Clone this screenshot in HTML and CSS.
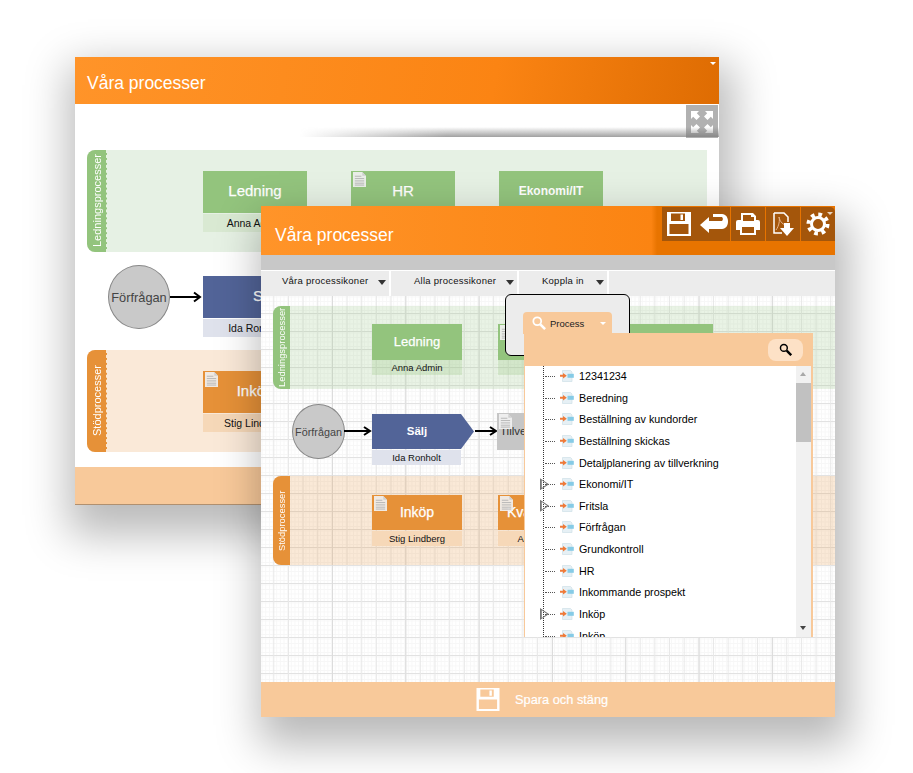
FILE: index.html
```html
<!DOCTYPE html>
<html lang="sv">
<head>
<meta charset="utf-8">
<title>Våra processer</title>
<link rel="stylesheet" href="styles.css">
</head>
<body>
<svg class="defs" width="0" height="0" aria-hidden="true">
  <symbol id="doc" viewBox="0 0 14 16">
    <path d="M0 0H10L14 4V16H0Z" fill="#f1f1f1" fill-opacity=".92"/>
    <path d="M10 0V4H14Z" fill="#cfcfcf"/>
    <path d="M2 4.500H9M2 7H12M2 9.500H12M2 12H12M2 14H12" stroke="#b4b4b4" stroke-width="1"/>
  </symbol>
  <symbol id="save" viewBox="0 0 24 24">
    <path fill-rule="evenodd" d="M0 0H24V24H0ZM4 1.500V9H18V1.500ZM13.500 2.500H16V8H13.500ZM2.500 12V22H21.500V12Z" fill="#fff"/>
  </symbol>
  <symbol id="proc" viewBox="0 0 14 12">
    <path d="M2.500 .5H10.500L12 2V11.500H2.500Z" fill="#e6f0f5" stroke="#cfdfe6" stroke-width=".7"/>
    <path d="M7.500 3.800H13.800V7.800H7.500Z" fill="#86cbe6"/>
    <path d="M0 4.800H3V3L6.800 5.800 3 8.600V6.800H0Z" fill="#ef7a38"/>
  </symbol>
</svg>

<section class="window back">
  <header class="bar bar-back">
    <h1 class="title">Våra processer</h1>
    <span class="caret caret-back"></span>
  </header>
  <div class="stage stage-back">
    <div class="fullscreen">
      <svg viewBox="0 0 32 32" width="32" height="32"><path d="M5 5H13L10.800 7.200 14 10.500 10.500 14 7.200 10.800 5 13ZM27 5V13L24.800 10.800 21.500 14 18 10.500 21.200 7.200 19 5ZM5 27V19L7.200 21.200 10.500 18 14 21.500 10.800 24.800 13 27ZM27 27H19L21.200 24.800 18 21.500 21.500 18 24.800 21.200 27 19Z" fill="#fff"/></svg>
    </div>
    <div class="cast"></div>
    <div class="lane lane-b lane-green l-b1"><span class="lane-tab">Ledningsprocesser</span></div>
    <div class="lane lane-b lane-orange l-b2"><span class="lane-tab">Stödprocesser</span></div>

    <div class="node node-b green b-led"><div class="box">Ledning</div><div class="sub">Anna Admin</div></div>
    <div class="node node-b green b-hr"><svg class="doc"><use href="#doc"/></svg><div class="box">HR</div><div class="sub">Ida</div></div>
    <div class="node node-b green b-eko"><div class="box strong">Ekonomi/IT</div><div class="sub">Stig</div></div>
    <div class="circle circle-b">Förfrågan</div>
    <svg class="arrow arrow-b" viewBox="0 0 32 12"><path d="M0 6H30M24 1.500L30 6 24 10.500" fill="none" stroke="#000" stroke-width="2"/></svg>
    <div class="node node-b blue b-salj"><div class="box">Sälj</div><div class="sub">Ida Ronholt</div></div>
    <div class="node node-b orange b-ink"><svg class="doc"><use href="#doc"/></svg><div class="box">Inköp</div><div class="sub">Stig Lindberg</div></div>
  </div>
  <footer class="foot foot-back"></footer>
</section>

<section class="window front">
  <header class="bar bar-front">
    <h1 class="title">Våra processer</h1>
    <div class="tools">
      <button class="tool tool-save"><svg width="24" height="24"><use href="#save"/></svg></button>
      <button class="tool tool-back">
        <svg viewBox="0 0 28 20" width="28" height="20"><path d="M0 11L9 3V7H22A3 3 0 0 0 22 3H13V0H22C30 0 30 15 22 15H9V19Z" fill="#fff"/></svg>
      </button>
      <button class="tool">
        <svg viewBox="0 0 24 22" width="24" height="22"><path fill-rule="evenodd" d="M5 0H17L20 3V7H22Q24 7 24 9V17H20V22H4V17H0V9Q0 7 2 7H5ZM7 2V8H18V4H15V2ZM6 14V20H18V14Z" fill="#fff"/></svg>
      </button>
      <button class="tool">
        <svg viewBox="0 0 24 24" width="24" height="24"><path d="M3 1H13L17 5V10" fill="none" stroke="#fff" stroke-width="1.500"/><path d="M3 1V21H11" fill="none" stroke="#fff" stroke-width="1.500"/><path d="M5 18C8 14 9 8 8 5 9 10 12 13 16 13" fill="none" stroke="#e8b58c" stroke-width="1"/><path d="M13 11H19V16H23L16 24 9 16H13Z" fill="#fff"/></svg>
      </button>
      <button class="tool tool-gear">
        <svg viewBox="0 0 24 24" width="24" height="24"><circle cx="12" cy="12" r="6.500" fill="none" stroke="#fff" stroke-width="3"/><circle cx="12" cy="12" r="9.500" fill="none" stroke="#fff" stroke-width="4" stroke-dasharray="3.700 3.760"/></svg>
        <span class="caret caret-gear"></span>
      </button>
    </div>
  </header>
  <div class="strip"></div>
  <nav class="toolbar">
    <div class="tab tab-1">Våra processikoner<span class="tab-arrow"></span></div>
    <div class="tab tab-2">Alla processikoner<span class="tab-arrow"></span></div>
    <div class="tab tab-3">Koppla in<span class="tab-arrow"></span></div>
  </nav>
  <div class="stage stage-front">
    <div class="lane lane-f lane-green l-f1"><span class="lane-tab">Ledningsprocesser</span></div>
    <div class="lane lane-f lane-orange l-f2"><span class="lane-tab">Stödprocesser</span></div>

    <div class="node node-f green f-led"><div class="box">Ledning</div><div class="sub">Anna Admin</div></div>
    <div class="node node-f green f-hr"><svg class="doc"><use href="#doc"/></svg><div class="box">HR</div><div class="sub">Ida</div></div>
    <div class="node node-f green f-eko"><div class="box">Ekonomi/IT</div></div>
    <div class="circle circle-f">Förfrågan</div>
    <svg class="arrow arrow-f1" viewBox="0 0 28 12"><path d="M0 6H26M20 2L26 6 20 10" fill="none" stroke="#000" stroke-width="2"/></svg>
    <div class="node node-f blue f-salj">
      <svg class="pentagon" viewBox="0 0 102 35" preserveAspectRatio="none"><path d="M0 0H89L102 17.500 89 35H0Z" fill="#526498"/></svg>
      <div class="box box-clear">Sälj</div><div class="sub">Ida Ronholt</div>
    </div>
    <svg class="arrow arrow-f2" viewBox="0 0 24 12"><path d="M0 6H21M15 2L21 6 15 10" fill="none" stroke="#000" stroke-width="2"/></svg>
    <div class="node node-f gray f-till"><svg class="doc"><use href="#doc"/></svg><div class="box">Tillverkning</div></div>
    <div class="node node-f orange f-ink"><svg class="doc"><use href="#doc"/></svg><div class="box">Inköp</div><div class="sub">Stig Lindberg</div></div>
    <div class="node node-f orange f-kva"><svg class="doc"><use href="#doc"/></svg><div class="box">Kvalitet</div><div class="sub">Anna Admin</div></div>

    <div class="popup">
      <div class="proc-tab">
        <svg viewBox="0 0 16 16" width="14" height="14"><circle cx="6" cy="6" r="4.500" fill="none" stroke="#fff" stroke-width="2"/><path d="M9.500 9.500L15 15" stroke="#fff" stroke-width="3"/></svg>
        <span>Process</span><span class="mini-caret"></span>
      </div>
    </div>
    <div class="panel">
      <div class="panel-head">
        <button class="search-btn"><svg viewBox="0 0 16 16" width="13" height="13"><circle cx="6" cy="6" r="4.200" fill="none" stroke="#000" stroke-width="1.800"/><path d="M9.500 9.500L15 15" stroke="#000" stroke-width="3"/></svg></button>
      </div>
      <div class="panel-body">
        <ul class="tree">
          <li class="row"><svg class="proc"><use href="#proc"/></svg>12341234</li>
          <li class="row"><svg class="proc"><use href="#proc"/></svg>Beredning</li>
          <li class="row"><svg class="proc"><use href="#proc"/></svg>Beställning av kundorder</li>
          <li class="row"><svg class="proc"><use href="#proc"/></svg>Beställning skickas</li>
          <li class="row"><svg class="proc"><use href="#proc"/></svg>Detaljplanering av tillverkning</li>
          <li class="row parent"><svg class="proc"><use href="#proc"/></svg>Ekonomi/IT</li>
          <li class="row parent"><svg class="proc"><use href="#proc"/></svg>Fritsla</li>
          <li class="row"><svg class="proc"><use href="#proc"/></svg>Förfrågan</li>
          <li class="row"><svg class="proc"><use href="#proc"/></svg>Grundkontroll</li>
          <li class="row"><svg class="proc"><use href="#proc"/></svg>HR</li>
          <li class="row"><svg class="proc"><use href="#proc"/></svg>Inkommande prospekt</li>
          <li class="row parent"><svg class="proc"><use href="#proc"/></svg>Inköp</li>
          <li class="row"><svg class="proc"><use href="#proc"/></svg>Inköp</li>
        </ul>
        <div class="scrollbar">
          <span class="sb-up"></span>
          <span class="sb-thumb"></span>
          <span class="sb-down"></span>
        </div>
      </div>
    </div>
  </div>
  <footer class="foot foot-front">
    <svg class="foot-icon" width="24" height="23"><use href="#save"/></svg>
    <span>Spara och stäng</span>
  </footer>
</section>
</body>
</html>
```
FILE: styles.css
```css
* { box-sizing: border-box; }
html, body { margin: 0; padding: 0; }
body {
  position: relative;
  width: 913px;
  height: 773px;
  overflow: hidden;
  background: #fff;
  font-family: "Liberation Sans", Arial, sans-serif;
}
.defs { position: absolute; }

.window { position: absolute; display: flex; flex-direction: column; background: #fff; }
.back {
  left: 75px; top: 57px; width: 644px; height: 448px;
  box-shadow: 4px 19px 40px 11px rgba(0, 0, 0, .27);
}
.front {
  left: 261px; top: 206px; width: 574px; height: 511px;
  box-shadow: 6px 20px 40px 8px rgba(0, 0, 0, .28);
}

.bar { position: relative; flex: none; display: flex; align-items: center; }
.bar-back {
  height: 47px; padding-left: 12px;
  background: linear-gradient(100deg, #ff9429 0%, #fb8413 65%, #de6c02 100%);
}
.bar-front {
  height: 49px; padding-left: 14px;
  background: linear-gradient(90deg, #ff9429 0%, #fb8412 68%, #e87400 69%, #e87400 100%);
}
.title { margin: 0; font-size: 17.5px; font-weight: 400; color: #fff; }
.bar-front .title { padding-top: 9px; }
.bar-back .title { padding-top: 6px; }

.caret {
  position: absolute; width: 0; height: 0;
  border-left: 3.5px solid transparent; border-right: 3.5px solid transparent;
  border-top: 3px solid #fff;
}
.caret-back { right: 3px; top: 5px; }
.caret-gear { right: 2px; top: 5px; border-top-color: #e7d3bf; }

.tools {
  position: absolute; right: 0; top: 1px;
  display: flex; height: 34px; width: 173px;
  background: #a4560b;
  border-top-right-radius: 5px;
}
.tool {
  position: relative; flex: 1 1 0; padding: 0; border: 0;
  background: none; display: flex; align-items: center; justify-content: center;
  border-left: 1px solid #e87400;
}
.tool:first-child { border-left: 0; }
.tool-save { flex: none; width: 38px; justify-content: flex-start; padding-left: 5px; }
.tool-back { flex: none; width: 30px; border-left: 0; justify-content: flex-start; }

.strip { flex: none; height: 15px; background: #c8c8c8; }
.toolbar {
  flex: none; height: 26px; display: flex;
  background: #ececec; border-top: 1px solid #fff;
}
.tab {
  position: relative; height: 25px; line-height: 20px;
  font-size: 9.5px; letter-spacing: .25px; color: #111;
  border-right: 2px solid #fff; white-space: nowrap;
}
.tab-1 { width: 130px; padding-left: 21px; }
.tab-2 { width: 128px; padding-left: 23px; }
.tab-3 { width: 90px; padding-left: 23px; }
.tab-arrow {
  position: absolute; right: 3px; top: 9px; width: 0; height: 0;
  border-left: 4.5px solid transparent; border-right: 4.5px solid transparent;
  border-top: 5px solid #333;
}

.stage { position: relative; flex: 1 1 auto; }
.stage-back { background: #fff; }
.stage-front {
  background-color: #fff;
  background-image:
    linear-gradient(to right, #dcdcdc 1px, transparent 1px),
    linear-gradient(to right, #e8e8e8 1px, transparent 1px),
    linear-gradient(to bottom, #e2e2e2 1px, transparent 1px),
    linear-gradient(to right, #f7f7f7 1px, transparent 1px),
    linear-gradient(to bottom, #f7f7f7 1px, transparent 1px);
  background-size: 73.33px 100%, 14.67px 100%, 100% 18px, 3.67px 100%, 100% 4.5px;
  background-position: 71px 0, 12.3px 0, 0 17px, .6px 0, 0 .5px;
}

.foot { flex: none; background: #f8c99a; }
.foot-back { height: 38px; border-bottom: 1px solid #b09070; }
.foot-front {
  height: 35px; display: flex; align-items: center; padding-left: 215px;
  color: #fff; font-size: 12.8px; -webkit-text-stroke: .2px #fff;
}
.foot-icon { flex: none; margin-right: 15px; }

.fullscreen {
  position: absolute; right: 1px; top: 1px; width: 32px; height: 33px;
  background: #b1b1b1; display: flex; align-items: center; justify-content: center;
}
.cast {
  position: absolute; left: 225px; right: 0; top: 23px; height: 10px;
  background: linear-gradient(to bottom, rgba(120, 120, 120, 0), rgba(120, 120, 120, .7));
  -webkit-mask-image: linear-gradient(to right, transparent, #000 35%);
  mask-image: linear-gradient(to right, transparent, #000 35%);
}

.lane { position: absolute; border-radius: 8px 0 0 8px; }
.lane-tab {
  position: absolute; left: 0; top: 0; bottom: 0;
  display: flex; align-items: center; justify-content: center;
  writing-mode: vertical-rl; transform: rotate(180deg);
  color: #fff; white-space: nowrap;
  border-radius: 0 8px 8px 0;
}
.lane-green .lane-tab { background: #93c47d; }
.lane-orange .lane-tab { background: #e69138; }
.lane-b .lane-tab { width: 20px; font-size: 11px; border-left: 1px dashed rgba(255, 255, 255, .8); }
.lane-f .lane-tab { width: 17px; font-size: 9.4px; }
.lane-b.lane-green { background: #e6f1e4; }
.lane-b.lane-orange { background: #fae9d8; }
.lane-f.lane-green { background: rgba(147, 196, 125, .2); }
.lane-f.lane-orange { background: rgba(230, 145, 56, .2); }
.l-b1 { left: 12px; top: 46px; width: 620px; height: 102px; }
.l-b2 { left: 12px; top: 246px; width: 620px; height: 102px; }
.l-f1 { left: 12px; top: 10px; width: 562px; height: 83px; }
.l-f2 { left: 12px; top: 180px; width: 562px; height: 89px; }

.node { position: absolute; color: #fff; }
.box { display: flex; align-items: center; justify-content: center; white-space: nowrap; -webkit-text-stroke: .25px currentColor; }
.sub { color: #111; text-align: center; white-space: nowrap; overflow: hidden; }
.node-b .box { height: 42px; padding-bottom: 3px; font-size: 15px; }
.node-b .box.strong { font-size: 12px; font-weight: 700; -webkit-text-stroke: 0; }
.node-b .sub { height: 18px; line-height: 18px; font-size: 10.5px; margin-top: 1px; }
.node-f .box { height: 36px; padding-bottom: 2px; font-size: 13px; }
.node-f .sub { height: 15px; line-height: 15px; font-size: 9.5px; }
.doc { position: absolute; left: 2px; top: 1px; width: 13px; height: 15px; }

.green .box { background: #93c47d; }
.green .sub { background: #d9e9d2; }
.node-f.green .sub { background: rgba(147, 196, 125, .25); }
.blue .box { background: #526498; }
.blue .sub { background: #dfe2ec; }
.orange .box { background: #e69138; }
.orange .sub { background: #f6d8b8; }
.gray .box { background: #c6c6c6; color: #333; justify-content: flex-start; padding-left: 3px; font-size: 11.5px; -webkit-text-stroke: 0; }

.b-led { left: 128px; top: 67px; width: 104px; }
.b-hr { left: 276px; top: 67px; width: 104px; }
.b-eko { left: 424px; top: 67px; width: 104px; }
.b-salj { left: 128px; top: 172px; width: 104px; }
.b-salj .box { justify-content: flex-start; padding-left: 50px; }
.b-ink { left: 128px; top: 267px; width: 104px; }

.circle {
  position: absolute; border-radius: 50%;
  background: #c9c9c9; border: 1px solid #888; color: #444;
  display: flex; align-items: center; justify-content: center; white-space: nowrap;
}
.circle-b { left: 33px; top: 161px; width: 62px; height: 64px; font-size: 12.8px; }
.circle-f { left: 31px; top: 108px; width: 53px; height: 55px; font-size: 10.8px; }
.arrow { position: absolute; }
.arrow-b { left: 95px; top: 187px; width: 32px; height: 12px; }
.arrow-f1 { left: 83px; top: 129px; width: 28px; height: 12px; }
.arrow-f2 { left: 214px; top: 129px; width: 24px; height: 12px; }

.f-led { left: 111px; top: 28px; width: 90px; }
.f-hr { left: 237px; top: 28px; width: 90px; }
.f-eko { left: 362px; top: 28px; width: 90px; }
.f-salj { left: 111px; top: 118px; width: 102px; }
.pentagon { position: absolute; left: 0; top: 0; width: 102px; height: 35px; }
.f-salj .box-clear { position: relative; height: 35px; width: 90px; background: none; font-size: 11.5px; font-weight: 700; -webkit-text-stroke: 0; }
.f-salj .sub { margin-top: 1px; width: 89px; background: #dfe2ec; }
.f-till { left: 236px; top: 117px; width: 90px; }
.f-till .box { height: 37px; }
.f-ink { left: 111px; top: 199px; width: 90px; }
.f-ink .box, .f-kva .box { height: 35px; font-size: 14px; }
.f-ink .sub, .f-kva .sub { margin-top: 1px; }
.f-kva { left: 237px; top: 199px; width: 90px; }
.f-kva .box { justify-content: flex-start; padding-left: 9px; }

.popup {
  position: absolute; left: 244px; top: -2px; width: 125px; height: 62px;
  background: #ececec; border: 1.5px solid #000; border-radius: 6px;
}
.proc-tab {
  position: absolute; left: 17px; top: 17px; width: 89px; height: 22px;
  display: flex; align-items: center; padding-left: 9px; gap: 4px;
  background: #f8c99a; border-radius: 4px 4px 0 0;
  font-size: 9.5px; color: #222;
}
.mini-caret {
  margin-left: 12px; width: 0; height: 0;
  border-left: 3.5px solid transparent; border-right: 3.5px solid transparent;
  border-top: 3px solid #fff;
}
.panel {
  position: absolute; left: 263px; top: 37px; width: 289px; height: 304px;
  display: flex; flex-direction: column;
  background: #f8c99a;
}
.panel-head { flex: none; height: 33px; display: flex; align-items: center; justify-content: flex-end; padding: 0 10px 0 0; }
.search-btn {
  width: 35px; height: 22px; padding: 0; border: 0; border-radius: 8px;
  background: #fde1c6; display: flex; align-items: center; justify-content: center;
}
.panel-body {
  flex: 1 1 auto; min-height: 0; display: flex;
  margin: 0 2px 0 1px; background: #fff; overflow: hidden;
}
.tree {
  flex: 1 1 auto; margin: 0; padding: 0; list-style: none; overflow: hidden;
  background: repeating-linear-gradient(to bottom, #333 0 1px, transparent 1px 2px) 18px 0 / 1px 100% no-repeat;
}
.row {
  position: relative; height: 21.65px; line-height: 20px;
  padding-left: 54px; font-size: 10.75px; color: #000; white-space: nowrap;
}
.row::before {
  content: ""; position: absolute; left: 20px; width: 10px; top: 10px;
  border-top: 1px dotted #555;
}
.parent::after {
  content: ""; position: absolute; left: 15px; top: 4px; width: 9px; height: 12px;
  background: #777;
  clip-path: polygon(0 0, 100% 50%, 0 100%, 0 0, 20% 18%, 20% 82%, 78% 50%, 20% 18%);
}
.proc { position: absolute; left: 35px; top: 4px; width: 14px; height: 12px; }

.scrollbar {
  position: relative; flex: none; width: 15px; background: #f1f1f1;
}
.sb-up, .sb-down {
  position: absolute; left: 4px; width: 0; height: 0;
  border-left: 3.5px solid transparent; border-right: 3.5px solid transparent;
}
.sb-up { top: 6px; border-bottom: 4px solid #a8a8a8; }
.sb-down { bottom: 7px; border-top: 4px solid #444; }
.sb-thumb { position: absolute; left: 0; right: 0; top: 17px; height: 59px; background: #c1c1c1; }
```
